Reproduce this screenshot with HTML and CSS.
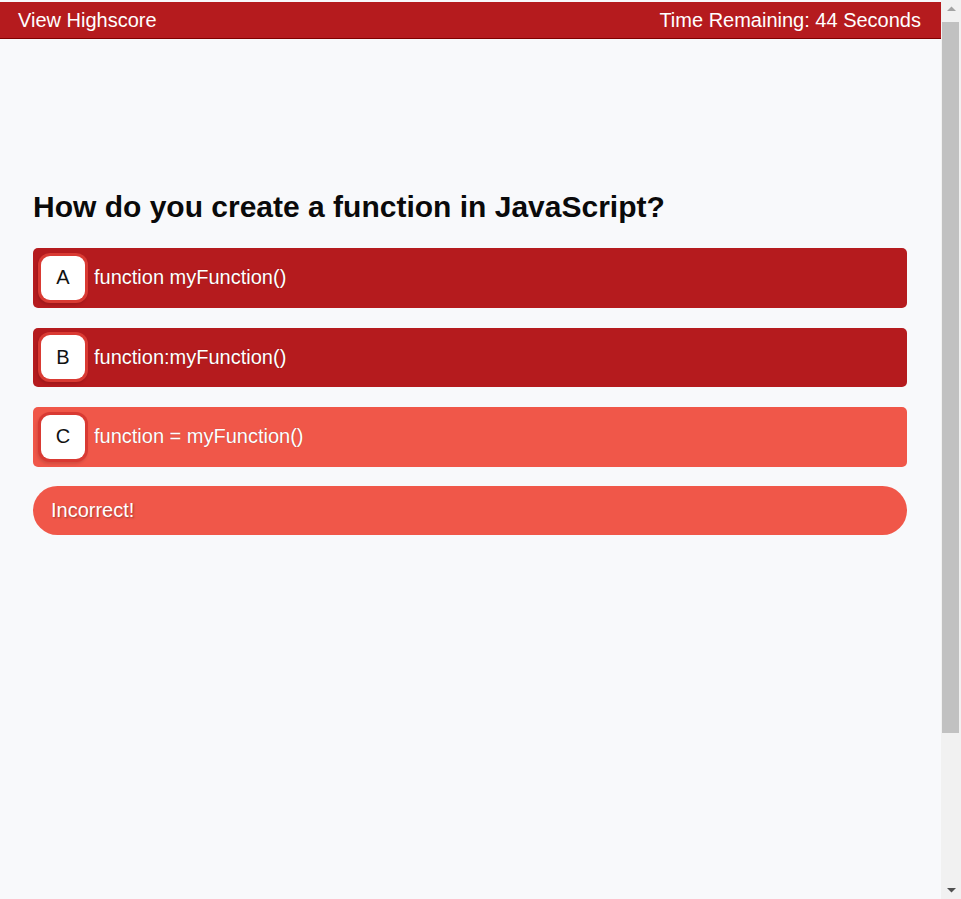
FILE: index.html
```html
<!DOCTYPE html>
<html lang="en">
<head>
<meta charset="utf-8">
<title>Code Quiz</title>
<link rel="stylesheet" href="styles.css">
</head>
<body>
<header class="topbar">
  <a class="topbar-link" href="#">View Highscore</a>
  <span class="timer">Time Remaining: 44 Seconds</span>
</header>
<main class="quiz">
  <h2 class="question">How do you create a function in JavaScript?</h2>
  <div class="answers">
    <button class="answer"><span class="badge">A</span><span class="answer-text">function myFunction()</span></button>
    <button class="answer"><span class="badge">B</span><span class="answer-text">function:myFunction()</span></button>
    <button class="answer answer-picked"><span class="badge">C</span><span class="answer-text">function = myFunction()</span></button>
  </div>
  <div class="feedback">Incorrect!</div>
</main>
<div class="scrollbar" aria-hidden="true">
  <div class="sb-btn sb-up"><svg width="9" height="5" viewBox="0 0 9 5"><path d="M0 5 L4.5 0.5 L9 5 Z" fill="#a3a3a3"/></svg></div>
  <div class="sb-track"><div class="sb-thumb"></div></div>
  <div class="sb-btn sb-down"><svg width="9" height="5" viewBox="0 0 9 5"><path d="M0 0 L9 0 L4.5 4.5 Z" fill="#505050"/></svg></div>
</div>
</body>
</html>
```
FILE: styles.css
```css
* { box-sizing: border-box; }
html, body {
  margin: 0;
  padding: 0;
  background: #f8f9fb;
  font-family: "Liberation Sans", Arial, sans-serif;
  color: #111;
}
body { padding: 2px 20px 0 0; }
.topbar {
  display: flex;
  justify-content: space-between;
  align-items: center;
  height: 37px;
  padding: 0 20px 0 18px;
  background: #b51b1e;
  border-bottom: 1px solid #7f0000;
  color: #fff;
  font-size: 20px;
}
.topbar-link {
  color: #fff;
  text-decoration: none;
}
.quiz {
  padding: 151px 34px 0 33px;
  min-height: 1056px;
}
.question {
  margin: 0 0 24px;
  font-size: 30px;
  font-weight: bold;
  color: #0a0a0a;
}
.answers {
  display: flex;
  flex-direction: column;
  gap: 20px;
}
.answer {
  display: flex;
  align-items: center;
  gap: 9px;
  height: 59.5px;
  padding: 0 0 0 8px;
  border: none;
  border-radius: 5px;
  background: #b51b1e;
  color: #fff;
  font-family: "Liberation Sans", Arial, sans-serif;
  font-size: 20px;
  text-align: left;
  cursor: pointer;
}
.answer-picked { background: #f05749; }
.badge {
  display: flex;
  align-items: center;
  justify-content: center;
  width: 44px;
  height: 44px;
  border-radius: 9px;
  background: #fff;
  color: #111;
  font-size: 20px;
  box-shadow: 0 0 0 3px #d93a33, -1px 2px 3px 3px rgba(0,0,0,0.12);
}
.answer-text { text-shadow: 0 0 1px rgba(0,0,0,0.3); }
.feedback {
  margin-top: 19px;
  height: 49.5px;
  display: flex;
  align-items: center;
  padding-left: 18px;
  border-radius: 25px;
  background: #f05749;
  color: #fff;
  font-size: 20px;
  text-shadow: 1px 1px 2px rgba(0,0,0,0.35);
}
.scrollbar {
  position: fixed;
  top: 0;
  right: 0;
  width: 20px;
  height: 100vh;
  display: flex;
  flex-direction: column;
  background: #f1f1f1;
}
.sb-btn {
  flex: 0 0 17px;
  display: flex;
  align-items: center;
  justify-content: center;
  padding-left: 1px;
}
.sb-track {
  flex: 1;
  padding: 5px 2px 0 1px;
}
.sb-thumb {
  height: 711px;
  background: #c1c1c1;
}
```
